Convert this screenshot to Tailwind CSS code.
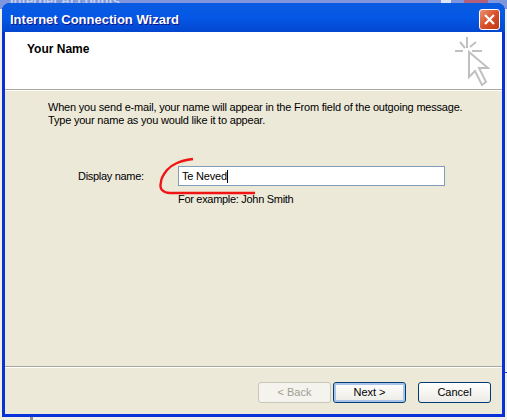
<!DOCTYPE html>
<html lang="en">
<head>
    <meta charset="UTF-8">
    <title>Internet Connection Wizard</title>
    <script src="https://cdn.jsdelivr.net/npm/@tailwindcss/browser@4"></script>
</head>
<body class="relative w-[507px] h-[420px] overflow-hidden bg-[#f1f0e8] font-['Liberation_Sans',sans-serif] text-[11px] tracking-[-0.2px] text-black">
    <!-- window behind -->
    <div class="absolute inset-x-0 top-0 h-[9px] bg-[#7f96dc] pl-[10px] text-[13px] leading-[8px] font-bold tracking-normal text-[#c4d0f2] whitespace-nowrap overflow-hidden">
        <span class="relative top-[-3px]">Internet Accounts</span>
    </div>
    <div class="absolute left-[441px] top-0 w-[10px] h-[3px] bg-[#dfe6f8]"></div>
    <div class="absolute left-[464px] top-0 w-[24px] h-[3px] bg-[#b5607c]"></div>
    <div class="absolute left-[30px] bottom-0 w-[3px] h-[3px] bg-[#8f8f8f]"></div>
    <div class="absolute right-0 top-[372px] w-[2px] h-px bg-[#2040c0]"></div>

    <!-- wizard window -->
    <div class="absolute left-[2px] top-[3px] w-[503px] h-[414px] flex flex-col rounded-t-[8px] bg-[#0831d9] overflow-hidden">
        <div class="h-[29px] shrink-0 flex items-center justify-between pt-[4px] pl-[8px] pr-[5px] bg-gradient-to-b from-[#0a5be0] via-[#0458e6] to-[#0346cf]">
            <span class="text-[13px] font-bold tracking-normal text-white [text-shadow:1px_1px_0_#0f1089]">Internet Connection Wizard</span>
            <div class="w-[21px] h-[21px] rounded-[3px] border border-white bg-gradient-to-br from-[#e8916f] via-[#d8502a] to-[#c03a14] flex items-center justify-center">
                <svg width="13" height="13" viewBox="0 0 13 13"><path d="M2 2 L11 11 M11 2 L2 11" stroke="#fff" stroke-width="2.2" /></svg>
            </div>
        </div>

        <div class="flex-1 flex flex-col mx-[3px] mb-[3px] bg-[#ece9d8] min-h-0">
            <div class="h-[58px] shrink-0 flex justify-between bg-white border-b border-[#aca899] shadow-[0_1px_0_#fff]">
                <span class="ml-[22px] mt-[10px] font-bold leading-[14px] text-[12px] tracking-normal">Your Name</span>
                <svg class="mr-[12px] mt-[4px]" width="36" height="52" viewBox="0 0 36 52" fill="none" stroke="#c0c0c0" stroke-width="2">
                    <path d="M13 1 V12 M1 15 H9 M18 15 H28 M6 6 L11 12 M22 6 L16 11" />
                    <path d="M15 16 V41 L21 35 L28 49 L32 46 L25 32 H34 Z" />
                </svg>
            </div>

            <div class="flex-1 px-[43px] pt-[11px] min-h-0">
                <p class="leading-[13px] whitespace-nowrap">When you send e-mail, your name will appear in the From field of the outgoing message.<br>Type your name as you would like it to appear.</p>
                <div class="flex items-start mt-[39px] ml-[30px]">
                    <label class="w-[100px] leading-[20px] tracking-[-0.3px]">Display name:</label>
                    <div>
                        <div class="w-[267px] h-[20px] border border-[#7f9db9] bg-white flex items-center pl-[3px]">
                            <span>Te Neved</span><span class="w-px h-[13px] bg-black"></span>
                        </div>
                        <p class="mt-[7px] leading-[13px] tracking-[-0.3px]">For example: John Smith</p>
                    </div>
                </div>
            </div>

            <div class="h-[48px] shrink-0 border-t border-t-[#aca899] shadow-[inset_0_1px_0_#fff] flex items-start pt-[15px] pl-[253px] tracking-normal">
                <button class="w-[73px] h-[21px] rounded-[3px] border border-[#c9c7ba] bg-[#f4f3ee] text-[#a19f8f]">&lt; Back</button>
                <button class="ml-[2px] w-[73px] h-[21px] rounded-[3px] border border-[#003c74] bg-gradient-to-b from-white to-[#ecebe5] shadow-[inset_0_0_0_2px_#a9c4ea]">Next &gt;</button>
                <button class="ml-[12px] w-[73px] h-[21px] rounded-[3px] border border-[#003c74] bg-gradient-to-b from-white to-[#ecebe5]">Cancel</button>
            </div>
        </div>
    </div>

    <!-- hand drawn red mark -->
    <svg class="absolute left-0 top-0" width="507" height="420" fill="none">
        <path d="M193 159 C186 160 181 161 177 163 C172 165 169 168 167 170 C163 175 161 179 161 182 C160 186 161 189 162 190 C164 192 167 193 170 193 H255" stroke="#f01414" stroke-width="2.4" />
    </svg>
</body>
</html>
